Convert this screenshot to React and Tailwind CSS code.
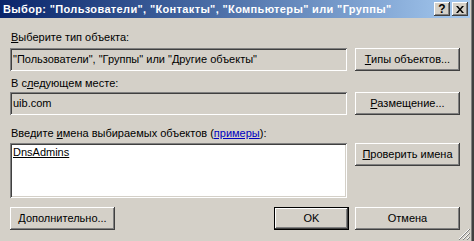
import React from "react";

const raised =
  "shadow-[inset_-1px_-1px_0_#404040,inset_1px_1px_0_#ffffff,inset_-2px_-2px_0_#808080,inset_2px_2px_0_#d4d0c8]";
const sunken =
  "shadow-[inset_1px_1px_0_#808080,inset_-1px_-1px_0_#ffffff,inset_2px_2px_0_#404040,inset_-2px_-2px_0_#d4d0c8]";

function Btn({ children, isDefault }) {
  return (
    <div
      className={`h-[23px] w-[105px] flex items-center justify-center bg-[#d4d0c8] text-black ${
        isDefault ? "border border-black" : ""
      }`}
    >
      <div className={`w-full h-full flex items-center justify-center ${raised}`}>
        {children}
      </div>
    </div>
  );
}

function U({ children }) {
  return <span className="underline underline-offset-[1px]">{children}</span>;
}

export default function App() {
  return (
    <div
      className="w-[474px] h-[241px] bg-[#d4d0c8] text-[11px] leading-[13px] text-black flex border-r-2 border-r-[#404040]"
      style={{ fontFamily: '"Liberation Sans", Arial, sans-serif' }}
    >
      <div className="flex-1 flex flex-col border-r border-r-[#808080] relative">
        {/* TITLE BAR */}
        <div className="h-[18px] mr-[1px] flex items-center justify-between bg-gradient-to-r from-[#0a246a] to-[#a6caf0] pl-[3px] pr-[2px]">
          <span className="text-white font-bold whitespace-nowrap tracking-[0.35px]">
            Выбор: "Пользователи", "Контакты", "Компьютеры" или "Группы"
          </span>
          <div className="flex gap-[2px]">
            <div className={`w-[16px] h-[14px] flex items-center justify-center font-bold text-[12px] ${raised} bg-[#d4d0c8]`}>
              ?
            </div>
            <div className={`w-[16px] h-[14px] flex items-center justify-center ${raised} bg-[#d4d0c8]`}>
              <svg width="8" height="7" viewBox="0 0 8 7">
                <path d="M0 0h2l2 2.5L6 0h2L5 3.5 8 7H6L4 4.5 2 7H0l3-3.5z" fill="black" />
              </svg>
            </div>
          </div>
        </div>

        {/* CONTENT */}
        <div className="flex flex-col pl-[10px] pr-[11px]">
          <div className="mt-[13px] pl-[1px]">
            <U>В</U>ыберите тип объекта:
          </div>
          <div className="mt-[4px] flex justify-between">
            <div className={`w-[337px] h-[23px] flex items-center pl-[3px] ${sunken}`}>
              "Пользователи", "Группы" или "Другие объекты"
            </div>
            <Btn>
              <span>
                <U>Т</U>ипы объектов...
              </span>
            </Btn>
          </div>

          <div className="mt-[6px] pl-[1px]">
            В с<U>л</U>едующем месте:
          </div>
          <div className="mt-[2px] flex justify-between">
            <div className={`w-[337px] h-[23px] flex items-center pl-[3px] ${sunken}`}>
              uib.com
            </div>
            <Btn>
              <span>
                <U>Р</U>азмещение...
              </span>
            </Btn>
          </div>

          <div className="mt-[12px] pl-[1px]">
            Введите <U>и</U>мена выбираемых объектов (
            <span className="text-[#0000c0] underline underline-offset-[1px]">примеры</span>):
          </div>
          <div className="mt-[3px] flex justify-between items-start">
            <div className={`w-[337px] h-[55px] bg-white pl-[3px] pt-[3px] ${sunken}`}>
              <U>DnsAdmins</U>
            </div>
            <Btn>
              <span>
                <U>П</U>роверить имена
              </span>
            </Btn>
          </div>

          <div className="mt-[9px] flex items-center">
            <Btn>
              <span>
                <U>Д</U>ополнительно...
              </span>
            </Btn>
            <div className="flex-1" />
            <div className="w-[75px]">
              <div className="h-[23px] flex items-center justify-center border border-black">
                <div className={`w-full h-full flex items-center justify-center ${raised}`}>OK</div>
              </div>
            </div>
            <div className="ml-[6px]">
              <Btn>Отмена</Btn>
            </div>
          </div>
        </div>

        {/* RESIZE GRIP */}
        <svg className="absolute right-[1px] bottom-[1px]" width="12" height="12" viewBox="0 0 12 12">
          <path d="M11 1L1 11M11 5L5 11M11 9L9 11" stroke="#ffffff" strokeWidth="1" />
          <path d="M12 1L1 12M12 5L5 12M12 9L9 12" stroke="#808080" strokeWidth="1" />
        </svg>
      </div>
    </div>
  );
}
